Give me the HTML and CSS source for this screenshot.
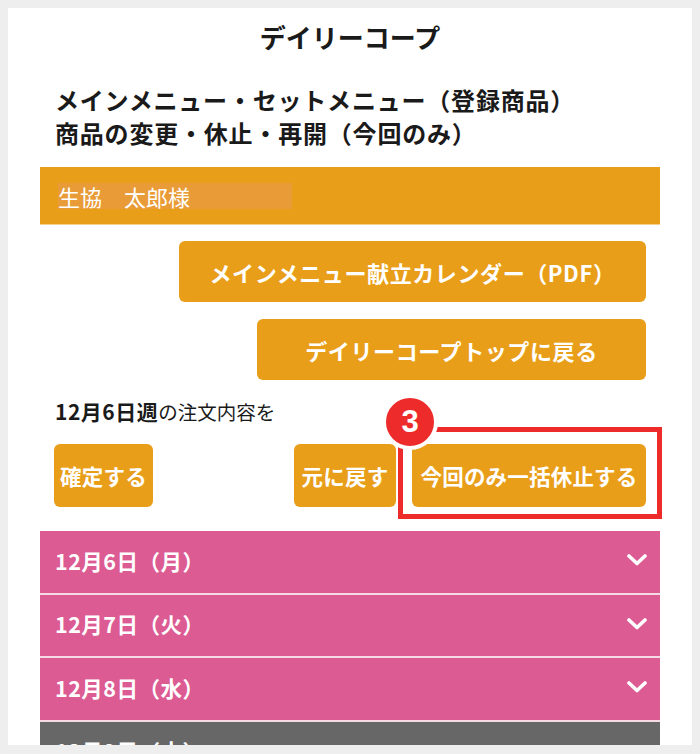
FILE: index.html
```html
<!DOCTYPE html>
<html lang="ja">
<head>
<meta charset="utf-8">
<title>デイリーコープ</title>
<link rel="stylesheet" href="styles.css">
</head>
<body>
<div class="frame">
  <h1 class="title">デイリーコープ</h1>
  <h2 class="heading">メインメニュー・セットメニュー（登録商品）<br>商品の変更・休止・再開（今回のみ）</h2>
  <div class="content">
    <div class="userbar"><span class="username">生協　太郎様</span></div>
    <div class="links">
      <a class="btn btn-pdf">メインメニュー献立カレンダー（PDF）</a>
      <a class="btn btn-top">デイリーコープトップに戻る</a>
    </div>
    <p class="week"><b>12月6日週</b>の注文内容を</p>
    <div class="actions">
      <a class="btn btn-small btn-confirm">確定する</a>
      <div class="actions-right">
        <a class="btn btn-small btn-reset">元に戻す</a>
        <a class="btn btn-small btn-pause">今回のみ一括休止する</a>
      </div>
      <div class="highlight"></div>
      <div class="badge">3</div>
    </div>
    <div class="days">
      <div class="day">12月6日（月）<svg class="chev" width="20" height="12" viewBox="0 0 20 12"><polyline points="2,2 10,9.5 18,2" fill="none" stroke="#fff" stroke-width="3.6" stroke-linecap="round" stroke-linejoin="round"/></svg></div>
      <div class="day">12月7日（火）<svg class="chev" width="20" height="12" viewBox="0 0 20 12"><polyline points="2,2 10,9.5 18,2" fill="none" stroke="#fff" stroke-width="3.6" stroke-linecap="round" stroke-linejoin="round"/></svg></div>
      <div class="day">12月8日（水）<svg class="chev" width="20" height="12" viewBox="0 0 20 12"><polyline points="2,2 10,9.5 18,2" fill="none" stroke="#fff" stroke-width="3.6" stroke-linecap="round" stroke-linejoin="round"/></svg></div>
      <div class="day day-off">12月9日（木）<svg class="chev" width="20" height="12" viewBox="0 0 20 12"><polyline points="2,2 10,9.5 18,2" fill="none" stroke="#fff" stroke-width="3.6" stroke-linecap="round" stroke-linejoin="round"/></svg></div>
    </div>
  </div>
</div>
</body>
</html>
```
FILE: styles.css
```css
html, body {
  margin: 0;
  padding: 0;
}
body {
  background: #eeeeee;
  padding: 8px;
  font-family: "Noto Sans CJK JP", "Noto Sans", sans-serif;
  color: #1a1a1a;
}
.frame {
  background: #ffffff;
  height: 737px;
  overflow: hidden;
}
.title {
  margin: 0;
  padding-top: 12px;
  font-size: 26px;
  line-height: 34px;
  font-weight: 700;
  text-align: center;
}
.heading {
  margin: 29px 0 0;
  padding-left: 47px;
  font-size: 24px;
  line-height: 33px;
  font-weight: 700;
  letter-spacing: 0.8px;
}
.content {
  margin: 18px 32px 0;
}
.userbar {
  height: 58px;
  background: #e99e19;
  display: flex;
  align-items: center;
  padding-left: 18px;
  border-bottom: 1px solid #f3d08f;
  box-sizing: border-box;
}
.username {
  display: inline-block;
  width: 234px;
  height: 26px;
  line-height: 26px;
  background: #e89b36;
  color: #ffffff;
  font-size: 22px;
  font-weight: 400;
  white-space: pre;
}
.links {
  display: flex;
  flex-direction: column;
  align-items: flex-end;
  gap: 17px;
  margin-top: 16px;
  padding-right: 14px;
}
.btn {
  display: flex;
  align-items: center;
  justify-content: center;
  background: #e99e19;
  color: #ffffff;
  font-weight: 700;
  font-size: 22px;
  letter-spacing: 0.6px;
  border-radius: 6px;
  box-sizing: border-box;
  white-space: nowrap;
  text-decoration: none;
}
.btn-pdf {
  width: 467px;
  height: 61px;
}
.btn-top {
  width: 389px;
  height: 61px;
}
.week {
  margin: 18px 0 0;
  padding-left: 15px;
  font-size: 19.5px;
  line-height: 26px;
  color: #1a1a1a;
}
.week b {
  font-size: 21px;
  font-weight: 700;
  letter-spacing: 0.5px;
}
.actions {
  position: relative;
  display: flex;
  align-items: center;
  margin-top: 19px;
  padding: 0 14px;
}
.actions-right {
  margin-left: auto;
  display: flex;
  gap: 16px;
}
.btn-small {
  height: 63px;
  font-size: 21.5px;
  letter-spacing: 0.2px;
}
.btn-confirm {
  width: 99px;
}
.btn-reset {
  width: 102px;
}
.btn-pause {
  width: 234px;
}
.highlight {
  position: absolute;
  left: 358px;
  top: -17px;
  width: 264px;
  height: 92px;
  border: 5px solid #ee2b2b;
  box-sizing: border-box;
}
.badge {
  position: absolute;
  left: 342px;
  top: -50px;
  width: 56px;
  height: 56px;
  border-radius: 50%;
  background: #ee2b2b;
  border: 4px solid #ffffff;
  box-sizing: border-box;
  color: #ffffff;
  font-family: "Liberation Sans", Arial, sans-serif;
  font-weight: 700;
  font-size: 31px;
  display: flex;
  align-items: center;
  justify-content: center;
}
.days {
  margin-top: 24px;
  background: #f6dbe7;
  display: flex;
  flex-direction: column;
  gap: 2px;
}
.day {
  height: 61.5px;
  box-sizing: border-box;
  background: #dc5b93;
  color: #ffffff;
  font-size: 21.5px;
  letter-spacing: 0.5px;
  font-weight: 700;
  display: flex;
  align-items: center;
  padding: 0 13px 3px 15px;
  justify-content: space-between;
}
.day-off {
  background: #676767;
}
.chev {
  display: block;
}
```
